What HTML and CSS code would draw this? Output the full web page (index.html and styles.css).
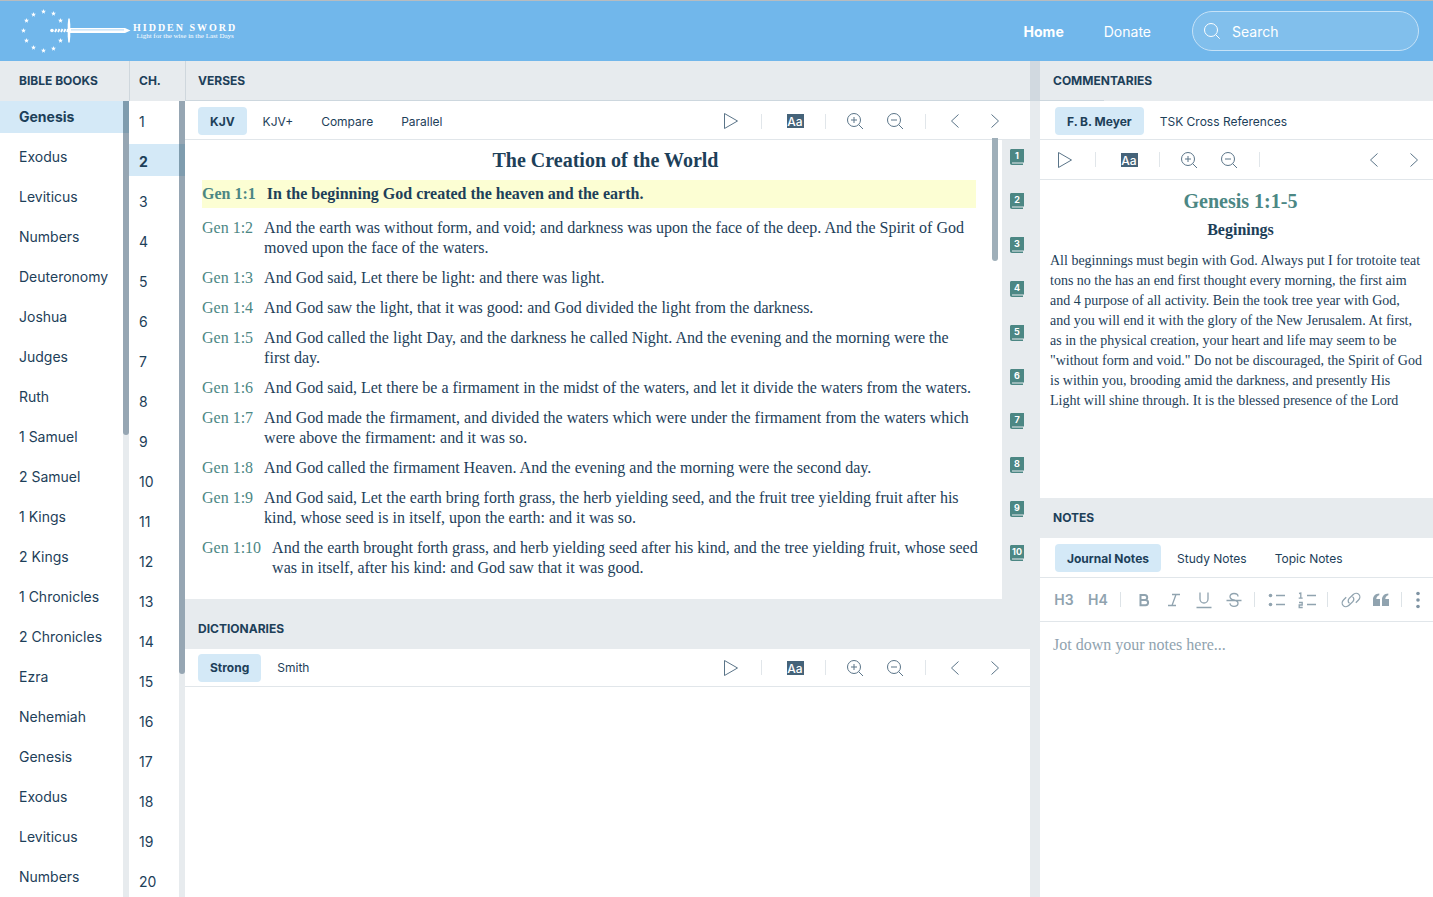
FILE: index.html
```html
<!DOCTYPE html>
<html lang="en">
<head>
<meta charset="utf-8">
<title>Hidden Sword</title>
<link rel="stylesheet" href="styles.css">
</head>
<body>
<svg class="defs" aria-hidden="true">
  <symbol id="star" viewBox="0 0 10 10"><path d="M5 0l1.300 3.500 3.700.1-3 2.300 1.100 3.600L5 7.400 1.900 9.500 3 5.900 0 3.600l3.700-.1z"/></symbol>
  <symbol id="play" viewBox="0 0 24 24"><path d="M5.500 4.500v15L18.500 12z"/></symbol>
  <symbol id="zoom-in" viewBox="0 0 24 24"><circle cx="11" cy="11" r="6.500"/><path d="M15.700 15.700l4.300 4.300M8 11h6M11 8v6"/></symbol>
  <symbol id="zoom-out" viewBox="0 0 24 24"><circle cx="11" cy="11" r="6.500"/><path d="M15.700 15.700l4.300 4.300M8 11h6"/></symbol>
  <symbol id="prev" viewBox="0 0 24 24"><path d="M15.500 5.500L8.500 12l7 6.500"/></symbol>
  <symbol id="next" viewBox="0 0 24 24"><path d="M8.500 5.500l7 6.500-7 6.500"/></symbol>
  <symbol id="book" viewBox="0 0 14 16"><path d="M1.500 0H14v14H13v2H2c-1.300 0-2-.8-2-2V1.500C0 .6.600 0 1.500 0z" fill="#4c8784"/><path d="M2 14h12" stroke="#e7ebee" stroke-width="1"/></symbol>
</svg>

<header class="topbar">
  <a class="brand" href="#" aria-label="Hidden Sword">
    <svg class="brand-mark" viewBox="0 0 112 46" width="112" height="46" aria-hidden="true">
      <g fill="#fff">
        <use href="#star" x="20" y="1" width="5" height="5"/>
        <use href="#star" x="30" y="3" width="5" height="5"/>
        <use href="#star" x="37" y="10" width="5" height="5"/>
        <use href="#star" x="37" y="30" width="5" height="5"/>
        <use href="#star" x="30" y="38" width="5" height="5"/>
        <use href="#star" x="20" y="40" width="5" height="5"/>
        <use href="#star" x="10" y="37" width="5" height="5"/>
        <use href="#star" x="3" y="30" width="5" height="5"/>
        <use href="#star" x="0" y="20" width="5" height="5"/>
        <use href="#star" x="3" y="10" width="5" height="5"/>
        <use href="#star" x="10" y="4" width="5" height="5"/>
        <circle cx="31" cy="22.500" r="1.800"/>
        <path d="M47.300 10.500h1.400l.6 6v12l-.6 6h-1.400l-.6-6v-12z"/>
        <path d="M49 20h55l5.500 2.500-5.500 2.500H49z"/>
      </g>
      <path d="M34 24l1.500-3M37 24l1.500-3M40 24l1.500-3M43 24l1.500-3M46 24l1-3" stroke="#fff" stroke-width="1.800"/>
      <path d="M50 21.900h53" stroke="#a9d3f4" stroke-width=".9"/>
    </svg>
    <span class="brand-text">
      <span class="brand-name">HIDDEN SWORD</span>
      <span class="brand-tag">Light for the wise in the Last Days</span>
    </span>
  </a>
  <nav class="nav">
    <a class="nav-link is-current" href="#">Home</a>
    <a class="nav-link" href="#">Donate</a>
  </nav>
  <label class="search">
    <svg width="18" height="18" viewBox="0 0 18 18" aria-hidden="true"><circle cx="8" cy="8" r="6.500"/><path d="M12.700 12.700l4 4"/></svg>
    <input type="search" placeholder="Search" aria-label="Search">
  </label>
</header>

<main class="workspace">
  <section class="column">
    <h2 class="heading">BIBLE BOOKS</h2>
    <div class="scroller">
      <ul class="list">
        <li class="item is-active"><a href="#">Genesis</a></li>
        <li class="item"><a href="#">Exodus</a></li>
        <li class="item"><a href="#">Leviticus</a></li>
        <li class="item"><a href="#">Numbers</a></li>
        <li class="item"><a href="#">Deuteronomy</a></li>
        <li class="item"><a href="#">Joshua</a></li>
        <li class="item"><a href="#">Judges</a></li>
        <li class="item"><a href="#">Ruth</a></li>
        <li class="item"><a href="#">1 Samuel</a></li>
        <li class="item"><a href="#">2 Samuel</a></li>
        <li class="item"><a href="#">1 Kings</a></li>
        <li class="item"><a href="#">2 Kings</a></li>
        <li class="item"><a href="#">1 Chronicles</a></li>
        <li class="item"><a href="#">2 Chronicles</a></li>
        <li class="item"><a href="#">Ezra</a></li>
        <li class="item"><a href="#">Nehemiah</a></li>
        <li class="item"><a href="#">Genesis</a></li>
        <li class="item"><a href="#">Exodus</a></li>
        <li class="item"><a href="#">Leviticus</a></li>
        <li class="item"><a href="#">Numbers</a></li>
      </ul>
      <div class="track"><div class="thumb thumb-books"></div></div>
    </div>
  </section>

  <section class="column column-chapters">
    <h2 class="heading">CH.</h2>
    <div class="scroller">
      <ul class="list">
        <li class="item"><a href="#">1</a></li>
        <li class="item is-active"><a href="#">2</a></li>
        <li class="item"><a href="#">3</a></li>
        <li class="item"><a href="#">4</a></li>
        <li class="item"><a href="#">5</a></li>
        <li class="item"><a href="#">6</a></li>
        <li class="item"><a href="#">7</a></li>
        <li class="item"><a href="#">8</a></li>
        <li class="item"><a href="#">9</a></li>
        <li class="item"><a href="#">10</a></li>
        <li class="item"><a href="#">11</a></li>
        <li class="item"><a href="#">12</a></li>
        <li class="item"><a href="#">13</a></li>
        <li class="item"><a href="#">14</a></li>
        <li class="item"><a href="#">15</a></li>
        <li class="item"><a href="#">16</a></li>
        <li class="item"><a href="#">17</a></li>
        <li class="item"><a href="#">18</a></li>
        <li class="item"><a href="#">19</a></li>
        <li class="item"><a href="#">20</a></li>
      </ul>
      <div class="track"><div class="thumb thumb-chapters"></div></div>
    </div>
  </section>

  <div class="reader">
    <section>
      <h2 class="heading heading-verses">VERSES</h2>
      <div class="bar bar-verses">
        <div class="tabs">
          <button class="tab is-active">KJV</button>
          <button class="tab">KJV+</button>
          <button class="tab">Compare</button>
          <button class="tab">Parallel</button>
        </div>
        <div class="tools">
          <button class="tool" aria-label="Play"><svg><use href="#play"/></svg></button>
          <span class="rule"></span>
          <button class="tool tool-font" aria-label="Font"><span class="font-badge">Aa</span></button>
          <span class="rule"></span>
          <button class="tool" aria-label="Zoom in"><svg><use href="#zoom-in"/></svg></button>
          <button class="tool" aria-label="Zoom out"><svg><use href="#zoom-out"/></svg></button>
          <span class="rule"></span>
          <button class="tool" aria-label="Previous"><svg><use href="#prev"/></svg></button>
          <button class="tool" aria-label="Next"><svg><use href="#next"/></svg></button>
        </div>
      </div>
      <div class="verses">
        <div class="passage">
          <h3 class="passage-title">The Creation of the World</h3>
          <div class="verse is-marked"><a class="ref" href="#">Gen 1:1</a><p>In the beginning God created the heaven and the earth.</p></div>
          <div class="verse"><a class="ref" href="#">Gen 1:2</a><p>And the earth was without form, and void; and darkness was upon the face of the deep. And the Spirit of God moved upon the face of the waters.</p></div>
          <div class="verse"><a class="ref" href="#">Gen 1:3</a><p>And God said, Let there be light: and there was light.</p></div>
          <div class="verse"><a class="ref" href="#">Gen 1:4</a><p>And God saw the light, that it was good: and God divided the light from the darkness.</p></div>
          <div class="verse"><a class="ref" href="#">Gen 1:5</a><p>And God called the light Day, and the darkness he called Night. And the evening and the morning were the first&nbsp;day.</p></div>
          <div class="verse"><a class="ref" href="#">Gen 1:6</a><p>And God said, Let there be a firmament in the midst of the waters, and let it divide the waters from the waters.</p></div>
          <div class="verse"><a class="ref" href="#">Gen 1:7</a><p>And God made the firmament, and divided the waters which were under the firmament from the waters which were above the firmament: and it was so.</p></div>
          <div class="verse"><a class="ref" href="#">Gen 1:8</a><p>And God called the firmament Heaven. And the evening and the morning were the second day.</p></div>
          <div class="verse"><a class="ref" href="#">Gen 1:9</a><p>And God said, Let the earth bring forth grass, the herb yielding seed, and the fruit tree yielding fruit after his kind, whose seed is in itself, upon the earth: and it was so.</p></div>
          <div class="verse"><a class="ref" href="#">Gen 1:10</a><p>And the earth brought forth grass, and herb yielding seed after his kind, and the tree yielding fruit, whose seed was in itself, after his kind: and God saw that it was good.</p></div>
        </div>
        <div class="verse-track"><div class="thumb thumb-verses"></div></div>
        <div class="bookmarks">
          <a class="bookmark" href="#"><svg><use href="#book"/></svg><span>1</span></a>
          <a class="bookmark" href="#"><svg><use href="#book"/></svg><span>2</span></a>
          <a class="bookmark" href="#"><svg><use href="#book"/></svg><span>3</span></a>
          <a class="bookmark" href="#"><svg><use href="#book"/></svg><span>4</span></a>
          <a class="bookmark" href="#"><svg><use href="#book"/></svg><span>5</span></a>
          <a class="bookmark" href="#"><svg><use href="#book"/></svg><span>6</span></a>
          <a class="bookmark" href="#"><svg><use href="#book"/></svg><span>7</span></a>
          <a class="bookmark" href="#"><svg><use href="#book"/></svg><span>8</span></a>
          <a class="bookmark" href="#"><svg><use href="#book"/></svg><span>9</span></a>
          <a class="bookmark" href="#"><svg><use href="#book"/></svg><span>10</span></a>
        </div>
      </div>
    </section>
    <section>
      <h2 class="heading heading-dictionaries">DICTIONARIES</h2>
      <div class="bar bar-dictionaries">
        <div class="tabs">
          <button class="tab is-active">Strong</button>
          <button class="tab">Smith</button>
        </div>
        <div class="tools">
          <button class="tool" aria-label="Play"><svg><use href="#play"/></svg></button>
          <span class="rule"></span>
          <button class="tool tool-font" aria-label="Font"><span class="font-badge">Aa</span></button>
          <span class="rule"></span>
          <button class="tool" aria-label="Zoom in"><svg><use href="#zoom-in"/></svg></button>
          <button class="tool" aria-label="Zoom out"><svg><use href="#zoom-out"/></svg></button>
          <span class="rule"></span>
          <button class="tool" aria-label="Previous"><svg><use href="#prev"/></svg></button>
          <button class="tool" aria-label="Next"><svg><use href="#next"/></svg></button>
        </div>
      </div>
    </section>
  </div>

  <div class="splitter"></div>

  <aside class="side">
    <section class="side-panel">
      <h2 class="heading">COMMENTARIES</h2>
      <div class="bar bar-commentaries">
        <div class="tabs">
          <button class="tab is-active">F. B. Meyer</button>
          <button class="tab">TSK Cross References</button>
        </div>
      </div>
      <div class="bar side-tools">
        <div class="tools">
          <button class="tool" aria-label="Play"><svg><use href="#play"/></svg></button>
          <span class="rule"></span>
          <button class="tool tool-font" aria-label="Font"><span class="font-badge">Aa</span></button>
          <span class="rule"></span>
          <button class="tool" aria-label="Zoom in"><svg><use href="#zoom-in"/></svg></button>
          <button class="tool" aria-label="Zoom out"><svg><use href="#zoom-out"/></svg></button>
          <span class="rule"></span>
        </div>
        <div class="tools">
          <button class="tool" aria-label="Previous"><svg><use href="#prev"/></svg></button>
          <button class="tool" aria-label="Next"><svg><use href="#next"/></svg></button>
        </div>
      </div>
      <article class="commentary">
        <h3 class="commentary-ref">Genesis 1:1-5</h3>
        <h4 class="commentary-title">Beginings</h4>
        <p class="commentary-text">All beginnings must begin with God. Always put I for trotoite teat tons no the has an end first thought every morning, the first aim and 4 purpose of all activity. Bein the took tree year with God, and you will end it with the glory of the New Jerusalem. At first, as in the physical creation, your heart and life may seem to be "without form and void." Do not be discouraged, the Spirit of God is within you, brooding amid the darkness, and presently His Light will shine through. It is the blessed presence of the Lord</p>
      </article>
    </section>
    <section class="side-panel">
      <h2 class="heading">NOTES</h2>
      <div class="bar bar-notes">
        <div class="tabs">
          <button class="tab is-active">Journal Notes</button>
          <button class="tab">Study Notes</button>
          <button class="tab">Topic Notes</button>
        </div>
      </div>
      <div class="editor-bar">
        <div class="edit-group">
          <button class="edit edit-text">H3</button>
          <button class="edit edit-text">H4</button>
        </div>
        <span class="edit-rule"></span>
        <div class="edit-group">
          <button class="edit" aria-label="Bold"><svg viewBox="0 0 24 24"><path stroke-width="2" d="M8.500 7h4.200a2.500 2.500 0 0 1 0 5H8.500zM8.500 12h5a2.600 2.600 0 0 1 0 5.200h-5z"/></svg></button>
          <button class="edit" aria-label="Italic"><svg viewBox="0 0 24 24"><path d="M10 6.500h8M6 17.500h8M14 6.500l-4 11"/></svg></button>
          <button class="edit" aria-label="Underline"><svg viewBox="0 0 24 24"><path d="M8 4.500v6.500a4 4 0 0 0 8 0V4.500M4.500 19.500h15"/></svg></button>
          <button class="edit" aria-label="Strikethrough"><svg viewBox="0 0 24 24"><path d="M16 8.500c0-1.800-1.600-3-4-3s-4 1.200-4 3.200c0 1.800 1.500 2.700 4 3.300s4 1.500 4 3.200c0 2-1.700 3.100-4 3.100s-4-1.200-4-3.100M4.500 12.500h15"/></svg></button>
        </div>
        <span class="edit-rule"></span>
        <div class="edit-group">
          <button class="edit" aria-label="Bulleted list"><svg viewBox="0 0 24 24"><path d="M11 7.500h9M11 16.500h9"/><g fill="#90a3af" stroke="none"><circle cx="5.500" cy="7.500" r="1.800"/><circle cx="5.500" cy="16.500" r="1.800"/></g></svg></button>
          <button class="edit" aria-label="Numbered list"><svg viewBox="0 0 24 24"><path d="M12 7.500h9M12 16.500h9M4 5.500l1.800-.5v5M3.700 10.200h4M4 14.500h3.200V17H4.200v2.500h3.500"/></svg></button>
        </div>
        <span class="edit-rule"></span>
        <div class="edit-group">
          <button class="edit" aria-label="Link"><svg viewBox="0 0 24 24"><path d="M10.500 15.200c-1.700-1-1.700-3.400-.3-4.800l3.800-3.700c1.700-1.600 4.300-1.800 5.800-.3s1.300 4-.3 5.600l-2.700 2.700M13.500 8.800c1.700 1 1.700 3.400.3 4.800L10 17.300c-1.700 1.600-4.300 1.800-5.800.3s-1.300-4 .3-5.600l2.700-2.700"/></svg></button>
          <button class="edit" aria-label="Quote"><svg viewBox="0 0 24 24"><path fill="#90a3af" stroke="none" d="M10.300 5.500v1.700c-2 .6-2.900 1.900-3 3.800H11v7H4v-6.500c0-3.500 2.300-5.700 6.300-6zM19.300 5.500v1.700c-2 .6-2.900 1.900-3 3.800H20v7h-7v-6.500c0-3.500 2.300-5.700 6.300-6z"/></svg></button>
        </div>
        <span class="edit-rule"></span>
        <button class="edit edit-more" aria-label="More"><svg viewBox="0 0 24 24"><g fill="#7e93a3" stroke="none"><circle cx="12" cy="5.500" r="1.800"/><circle cx="12" cy="12" r="1.800"/><circle cx="12" cy="18.500" r="1.800"/></g></svg></button>
      </div>
      <textarea class="note" placeholder="Jot down your notes here..." aria-label="Notes"></textarea>
    </section>
  </aside>
</main>
</body>
</html>
```
FILE: styles.css
```css
* { box-sizing: border-box; }

body {
  display: flex;
  flex-direction: column;
  height: 100vh;
  margin: 0;
  overflow: hidden;
  border-top: 1px solid #b8bcbf;
  background: #fff;
  color: #1d4059;
  font-family: Inter, "Liberation Sans", sans-serif;
}

h2, h3, h4, p, ul { margin: 0; padding: 0; }
ul { list-style: none; }
a { color: inherit; text-decoration: none; }
button { border: 0; padding: 0; background: none; color: inherit; font: inherit; }
.defs { display: none; }

/* Top bar */
.topbar {
  display: flex;
  align-items: center;
  height: 60px;
  padding: 0 14px 0 21px;
  background: #71b7eb;
  color: #fff;
}
.brand { display: flex; align-items: center; margin-right: auto; }
.brand-text { display: flex; flex-direction: column; align-items: center; font-family: "Liberation Serif", serif; }
.brand-name { font-size: 10px; font-weight: 700; line-height: 9px; letter-spacing: 2px; }
.brand-tag { font-size: 7px; line-height: 8px; }
.nav { display: flex; gap: 40px; margin-right: 41px; font-size: 14px; }
.nav-link.is-current { font-weight: 700; }
.search {
  display: flex;
  align-items: center;
  gap: 11px;
  width: 227px;
  height: 40px;
  padding: 0 12px 0 10px;
  border: 1px solid #c6e2f7;
  border-radius: 20px;
  background: #81bfec;
}
.search svg { flex: none; fill: none; stroke: #fff; }
.search input { width: 100%; border: 0; outline: 0; padding: 0; background: none; color: #fff; font: inherit; font-size: 14px; }
.search input::placeholder { color: #fff; opacity: 1; }

/* Workspace columns */
.workspace {
  display: grid;
  grid-template-columns: 129px 56px minmax(0, 1fr) 10px 393px;
  flex: 1;
  min-height: 0;
}
.heading {
  flex: none;
  height: 40px;
  padding-left: 13px;
  background: #e7ebee;
  font-size: 12px;
  font-weight: 700;
  line-height: 40px;
}
.column { display: flex; flex-direction: column; min-height: 0; }
.column .heading { padding-left: 19px; }
.column-chapters .heading { padding-left: 9px; border-left: 1px solid #cfd7dd; }
.scroller { display: grid; grid-template-columns: minmax(0, 1fr) 6px; flex: 1; min-height: 0; }
.list { min-height: 0; overflow: hidden; }
.item { height: 32px; margin-bottom: 8px; padding-left: 19px; font-size: 14px; line-height: 32px; }
.item.is-active { background: #d4e9f7; font-weight: 700; }
.column-chapters .list { padding-top: 3px; }
.column-chapters .item { padding: 2px 0 0 10px; }
.track { background: #e7ebee; }
.thumb { border-radius: 0 0 3px 3px; background: #96a6b3; }
.thumb-books { height: 42%; }
.thumb-chapters { height: 72%; }

/* Scrollbar is tinted where it crosses the active row */
.thumb-books { background: linear-gradient(#7f9cae 32px, #96a6b3 32px); }
.thumb-chapters { background: linear-gradient(#96a6b3 43px, #7f9cae 43px 75px, #96a6b3 75px); }

/* Tab bars and tools */
.bar {
  display: flex;
  align-items: center;
  justify-content: space-between;
  height: 39px;
  padding: 0 23px 0 13px;
  border-bottom: 1px solid #e1e6ea;
}
.bar-verses { padding-top: 2px; }
.bar-dictionaries { height: 38px; }
.bar-commentaries { padding: 2px 0 0 15px; }
.bar-notes { height: 40px; padding: 1px 0 0 15px; }
.side-tools { height: 40px; padding: 0 7px 0 13px; }
.tabs { display: flex; gap: 4px; }
.tab { height: 28px; padding: 0 12px; border-radius: 4px; font-size: 12px; white-space: nowrap; }
.tab.is-active { background: #d4e9f7; font-weight: 700; }
.tools { display: flex; align-items: center; gap: 16px; }
.tool { width: 24px; height: 24px; }
.tool svg { display: block; width: 24px; height: 24px; fill: none; stroke: #5a7488; stroke-linejoin: round; }
.tool-font { display: flex; align-items: center; justify-content: center; margin-left: 4px; }
.font-badge { width: 17px; height: 14px; background: #456379; color: #fff; font-size: 12px; font-weight: 500; line-height: 15px; text-align: center; }
.rule { width: 1px; height: 15px; margin: 0 1px 0 2px; background: #e1e6ea; }

/* Verses and dictionaries */
.reader { display: flex; flex-direction: column; min-width: 0; }
.heading-verses { position: relative; border-left: 1px solid #cfd7dd; border-bottom: 1px solid #cdd7de; padding-left: 12px; }
.heading-verses::after { content: ""; position: absolute; left: 100%; bottom: -1px; width: 74px; height: 1px; background: #cdd7de; }
.heading-dictionaries { height: 50px; padding-top: 10px; }
.verses { display: grid; grid-template-columns: minmax(0, 1fr) 10px 28px; }
.passage { padding: 8px 11px 21px 17px; font-family: "Liberation Serif", serif; font-size: 16px; line-height: 20px; }
.passage-title { margin-bottom: 8px; padding-left: 28px; font-size: 20px; line-height: 24px; text-align: center; }
.verse { display: flex; gap: 11px; margin-top: 10px; }
.verse.is-marked { margin: 0 5px 0 0; padding: 4px 0; background: #fcfed3; font-weight: 700; }
.ref { flex: none; color: #4c8784; }
.verse-track { margin-top: -2px; }
.thumb-verses { width: 6px; height: 123px; background: #9fafb9; }
.bookmarks { display: flex; flex-direction: column; gap: 28px; align-items: center; padding: 9px 0 0 2px; background: #e7ebee; }
.bookmark { display: grid; width: 14px; height: 16px; color: #fff; font-size: 9px; font-weight: 700; line-height: 14px; text-align: center; }
.bookmark svg, .bookmark span { grid-area: 1 / 1; width: 14px; height: 16px; }

/* Right side */
.splitter { background: linear-gradient(#d1d9e0 40px, #e7ebee 40px); }
.side { display: grid; grid-template-rows: 23fr 21fr; min-height: 0; }
.side-panel { display: flex; flex-direction: column; min-height: 0; }
.commentary { padding: 9px 10px; font-family: "Liberation Serif", serif; }
.commentary-ref, .commentary-title { padding-left: 8px; text-align: center; }
.commentary-ref { color: #4c8784; font-size: 20px; line-height: 24px; }
.commentary-title { margin: 7px 0 11px; font-size: 16px; line-height: 20px; }
.commentary-text { font-size: 14px; line-height: 20px; }

/* Notes editor */
.editor-bar {
  display: flex;
  align-items: center;
  justify-content: space-between;
  height: 44px;
  padding: 0 7px 0 10px;
  border-bottom: 1px solid #e1e6ea;
  color: #90a3af;
}
.edit-group { display: flex; gap: 6px; }
.edit-group:nth-of-type(n+2) { padding-left: 2px; }
.edit { width: 24px; height: 24px; }
.edit svg { display: block; width: 24px; height: 24px; fill: none; stroke: #90a3af; stroke-width: 1.3; }
.edit-text { width: 28px; font-size: 14px; font-weight: 600; }
.edit-more { width: 16px; }
.edit-more svg { margin-left: -4px; }
.edit-rule { width: 1px; height: 15px; background: #dde3e7; }
.note {
  flex: 1;
  padding: 12px 13px;
  border: 0;
  outline: 0;
  resize: none;
  font-family: "Liberation Serif", serif;
  font-size: 16px;
  line-height: 22px;
}
.note::placeholder { color: #90a3af; opacity: 1; }
```
